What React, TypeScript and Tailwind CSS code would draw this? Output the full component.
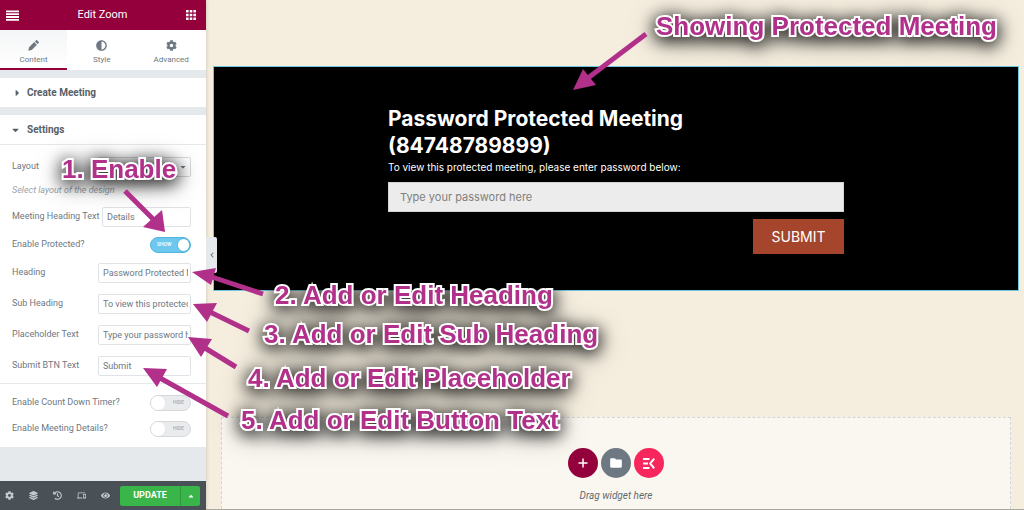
import { useState } from "react"
import { FaAdjust, FaCaretDown, FaCaretRight, FaCaretUp, FaChevronLeft, FaCog, FaEye, FaHistory, FaLayerGroup } from "react-icons/fa"
import { MdDevices, MdFolder } from "react-icons/md"

function PencilIcon({ className }: { className?: string }) {
    return (
        <svg viewBox="0 0 11 11" className={className} fill="currentColor">
            <path d="M.3 10.7l.8-3.5L6.2 2.1l2.7 2.7-5.1 5.1zM6.9 1.4L8 .4c.4-.4.9-.4 1.3 0l1.3 1.3c.4.4.4.9 0 1.3l-1 1.1z" />
        </svg>
    )
}

const tabs = [
    { name: "Content", icon: PencilIcon, width: "w-[67px]" },
    { name: "Style", icon: FaAdjust, width: "flex-1" },
    { name: "Advanced", icon: FaCog, width: "flex-1" },
]

const tools = [
    { name: "Settings", icon: FaCog },
    { name: "Navigator", icon: FaLayerGroup },
    { name: "History", icon: FaHistory },
    { name: "Responsive mode", icon: MdDevices },
    { name: "Preview changes", icon: FaEye },
]

function TextRow({ id, label, value, onChange, wide = true }: {
    id: string
    label: string
    value: string
    onChange: (value: string) => void
    wide?: boolean
}) {
    return (
        <div className="flex h-5 items-center justify-between">
            <label htmlFor={id} className="whitespace-nowrap">{label}</label>
            <input
                id={id}
                type="text"
                value={value}
                onChange={(e) => onChange(e.target.value)}
                className={`h-5 rounded-xs border border-[#dfe3e7] bg-white pr-0.5 pl-1 text-[9px] text-[#6d7882] outline-none ${wide ? "w-[93px]" : "w-[89px]"}`}
            />
        </div>
    )
}

function SwitchRow({ label, checked, onChange }: {
    label: string
    checked: boolean
    onChange: (checked: boolean) => void
}) {
    return (
        <label className="flex h-4 cursor-pointer items-center justify-between">
            {label}
            <input type="checkbox" role="switch" className="sr-only" checked={checked} onChange={(e) => onChange(e.target.checked)} />
            <span className={`flex h-4 w-[41px] items-center justify-between rounded-full border text-[5px] font-medium ${checked ? "flex-row-reverse border-[#4fb5df] bg-[#6ec8ee] text-white" : "border-[#d5d8db] bg-[#e9ebed] text-[#a4a9ae]"}`}>
                <span className={`size-3.5 rounded-full bg-white ${checked ? "border border-[#4fb5df]" : ""}`} />
                <span className="px-1.5">{checked ? "SHOW" : "HIDE"}</span>
            </span>
        </label>
    )
}

function Sidebar() {
    const [active, setActive] = useState("Content")
    const [details, setDetails] = useState("Details")
    const [heading, setHeading] = useState("Password Protected Meeting")
    const [subHeading, setSubHeading] = useState("To view this protected meeting")
    const [placeholder, setPlaceholder] = useState("Type your password here")
    const [submit, setSubmit] = useState("Submit")
    const [isProtected, setIsProtected] = useState(true)
    const [countDown, setCountDown] = useState(false)
    const [meetingDetails, setMeetingDetails] = useState(false)

    return (
        <aside className="relative flex w-[206px] shrink-0 flex-col bg-[#e6e9ec] font-['Roboto',sans-serif] text-[9px] text-[#6d7882] shadow-[0_0_4px_rgba(0,0,0,0.2)]">
            <header className="flex h-[30px] items-center justify-between bg-[#93003c] px-1.5 text-white">
                <button aria-label="Menu">
                    <svg viewBox="0 0 13 11" className="h-[11px] w-[13px]" fill="currentColor">
                        <path d="M0 .5h13v1.8H0zM0 3.3h13v1.8H0zM0 6.1h13v1.8H0zM0 8.9h13v1.8H0z" />
                    </svg>
                </button>
                <h1 className="text-[11px]">Edit Zoom</h1>
                <button aria-label="Widgets" className="pr-1">
                    <svg viewBox="0 0 10 10" className="size-2.5" fill="currentColor">
                        <path d="M0 0h2.6v2.6H0zM3.7 0h2.6v2.6H3.7zM7.4 0H10v2.6H7.4zM0 3.7h2.6v2.6H0zM3.7 3.7h2.6v2.6H3.7zM7.4 3.7H10v2.6H7.4zM0 7.4h2.6V10H0zM3.7 7.4h2.6V10H3.7zM7.4 7.4H10V10H7.4z" />
                    </svg>
                </button>
            </header>

            <nav className="flex h-10 bg-white">
                {tabs.map(({ name, icon: Icon, width }) => (
                    <button
                        key={name}
                        onClick={() => setActive(name)}
                        className={`flex flex-col items-center gap-1 border-b-2 pt-2.5 text-[8px] leading-[10px] ${width} ${active === name ? "border-[#93003c] bg-linear-to-b from-[#f4f5f6] to-white" : "border-white"}`}
                    >
                        <Icon className="size-[11px]" />
                        {name}
                    </button>
                ))}
            </nav>

            <button className="mt-2 flex h-[29px] items-center bg-white px-3 text-[10px] font-bold text-[#556068]">
                <FaCaretRight className="mr-1 w-[11px]" />
                Create Meeting
            </button>

            <section className="mt-2 bg-white">
                <button className="flex h-[30px] w-full items-center border-b border-[#e6e9ec] px-2.5 text-[10px] font-bold text-[#556068]">
                    <FaCaretDown className="mr-1.5 w-[11px]" />
                    Settings
                </button>
                <div className="px-3 pt-3 pr-[15px]">
                    <div className="flex h-5 items-center justify-between">
                        <label htmlFor="layout">Layout</label>
                        <div className="relative">
                            <select id="layout" className="block h-5 w-[93px] appearance-none rounded-xs border border-[#d5dadf] bg-white px-1">
                                <option></option>
                            </select>
                            <FaCaretDown className="pointer-events-none absolute top-1.5 right-1 size-2" />
                        </div>
                    </div>
                    <p className="mt-2 mb-3 leading-[10px] text-[#9aa3ab] italic">Select layout of the design</p>
                    <TextRow id="details" label="Meeting Heading Text" value={details} onChange={setDetails} wide={false} />
                    <div className="my-2.5">
                        <SwitchRow label="Enable Protected?" checked={isProtected} onChange={setIsProtected} />
                    </div>
                    <div className="flex flex-col gap-[11px]">
                        <TextRow id="heading" label="Heading" value={heading} onChange={setHeading} />
                        <TextRow id="sub-heading" label="Sub Heading" value={subHeading} onChange={setSubHeading} />
                        <TextRow id="placeholder" label="Placeholder Text" value={placeholder} onChange={setPlaceholder} />
                        <TextRow id="submit" label="Submit BTN Text" value={submit} onChange={setSubmit} />
                    </div>
                </div>
                <div className="mt-[7px] flex flex-col gap-2.5 border-t border-[#e6e9ec] pt-[11px] pr-[15px] pb-2.5 pl-3">
                    <SwitchRow label="Enable Count Down Timer?" checked={countDown} onChange={setCountDown} />
                    <SwitchRow label="Enable Meeting Details?" checked={meetingDetails} onChange={setMeetingDetails} />
                </div>
            </section>

            <footer className="mt-auto flex h-[29px] items-center justify-between bg-[#495157] pr-1.5 pl-[5px] text-[#c2cbd2]">
                <div className="flex gap-[15px]">
                    {tools.map(({ name, icon: Icon }) => (
                        <button key={name} aria-label={name}><Icon className="size-[9px]" /></button>
                    ))}
                </div>
                <div className="flex h-5 text-white">
                    <button className="w-[60px] rounded-l-xs bg-[#39b54a] font-bold">UPDATE</button>
                    <button aria-label="Save options" className="flex w-5 items-center justify-center rounded-r-xs border-l border-[#2c9a3c] bg-[#39b54a]">
                        <FaCaretUp className="size-2" />
                    </button>
                </div>
            </footer>

            <button aria-label="Hide panel" className="absolute top-[237px] left-full z-10 flex h-9 w-[11px] items-center justify-center rounded-r-xs bg-[#e6e9ec]">
                <FaChevronLeft className="size-1.5" />
            </button>
        </aside>
    )
}

function Canvas() {
    return (
        <main className="flex min-w-0 flex-1 flex-col border-b border-[#aaa89f] bg-[#f5eedf] pt-[66px] pr-[5px] pl-[7px] font-['Inter',sans-serif]">
            <section className="border border-[#71c7df] bg-black px-4 pt-[38px] pb-9 text-white">
                <form className="mx-auto max-w-[456px]" onSubmit={(e) => e.preventDefault()}>
                    <h2 className="text-[21px] leading-[27px] font-bold">
                        Password Protected Meeting
                        <br />
                        (84748789899)
                    </h2>
                    <label htmlFor="password" className="block text-[10px] leading-4">
                        To view this protected meeting, please enter password below:
                    </label>
                    <input
                        id="password"
                        type="password"
                        placeholder="Type your password here"
                        className="mt-[7px] block h-[30px] w-full border border-[#d5d5d0] bg-[#ececec] px-[11px] text-[11px] text-gray-800 placeholder-[#80807d] outline-none"
                    />
                    <button className="mt-[7px] ml-auto block h-[35px] w-[91px] bg-[#a5452c] text-[14px]">SUBMIT</button>
                </form>
            </section>

            <section className="mx-2 mt-[126px] flex flex-1 flex-col items-center border border-b-0 border-dashed border-[#d3d6d4] bg-[#faf7f0] pt-[30px]">
                <div className="flex gap-[3px] text-white">
                    <button aria-label="Add section" className="flex size-[30px] items-center justify-center rounded-full bg-[#93003c]">
                        <svg viewBox="0 0 10 10" className="size-2.5" stroke="currentColor" strokeWidth="1.5"><path d="M5 .5v9M.5 5h9" /></svg>
                    </button>
                    <button aria-label="Add template" className="flex size-[30px] items-center justify-center rounded-full bg-[#6d7882]">
                        <MdFolder className="size-3.5" />
                    </button>
                    <button aria-label="ElementsKit" className="flex size-[30px] items-center justify-center rounded-full bg-[#f7275d]">
                        <svg viewBox="0 0 12 11" className="h-[11px] w-3" fill="none" stroke="currentColor" strokeWidth="2">
                            <path d="M0 1h6.5M0 5.5h5M0 10h6.5M11.2.7 7.2 5.5l4 4.8" />
                        </svg>
                    </button>
                </div>
                <p className="mt-[13px] font-['Roboto',sans-serif] text-[10px] leading-[10px] text-[#5f6a70] italic">Drag widget here</p>
            </section>
        </main>
    )
}

const arrows = [
    { line: "M125 191 154 220", head: "165,232 143,227 162,210" },
    { line: "M263 294 212 277", head: "192,272 216,268 211,285" },
    { line: "M249 331 210 312", head: "193,304 217,303 207,322" },
    { line: "M236 367 205 348", head: "188,337 212,339 201,357" },
    { line: "M228 416 160 378", head: "143,368 167,369 157,387" },
    { line: "M646 34 588 78", head: "573,90 583,69 596,85" },
]

// Callouts float above the editor, they never take clicks
function Annotations() {
    return (
        <div className="pointer-events-none absolute inset-0 z-20 overflow-hidden">
            <div className="absolute inset-0 font-['Liberation_Sans',Arial,sans-serif] text-[26px] leading-[30px] font-bold whitespace-nowrap text-[#b0308a] [-webkit-text-stroke:4px_white] [filter:drop-shadow(0_3px_8px_rgba(0,0,0,0.75))_drop-shadow(0_2px_10px_rgba(0,0,0,0.5))] [paint-order:stroke_fill]">
                <p className="absolute top-[11px] left-[656px]">Showing Protected Meeting</p>
                <p className="absolute top-[154px] left-[62px]">1. Enable</p>
                <p className="absolute top-[280px] left-[275px]">2. Add or Edit Heading</p>
                <p className="absolute top-[319px] left-[264px]">3. Add or Edit Sub Heading</p>
                <p className="absolute top-[363px] left-[248px]">4. Add or Edit Placeholder</p>
                <p className="absolute top-[405px] left-[241px]">5. Add or Edit Button Text</p>
            </div>
            <svg width="1024" height="510" className="absolute top-0 left-0" stroke="#b0308a" fill="#b0308a">
                {arrows.map((arrow) => (
                    <g key={arrow.head}>
                        <path d={arrow.line} strokeWidth="5" />
                        <polygon points={arrow.head} stroke="none" />
                    </g>
                ))}
            </svg>
        </div>
    )
}

export default function App() {
    return (
        <div className="relative flex min-h-screen">
            <Sidebar />
            <Canvas />
            <Annotations />
        </div>
    )
}
